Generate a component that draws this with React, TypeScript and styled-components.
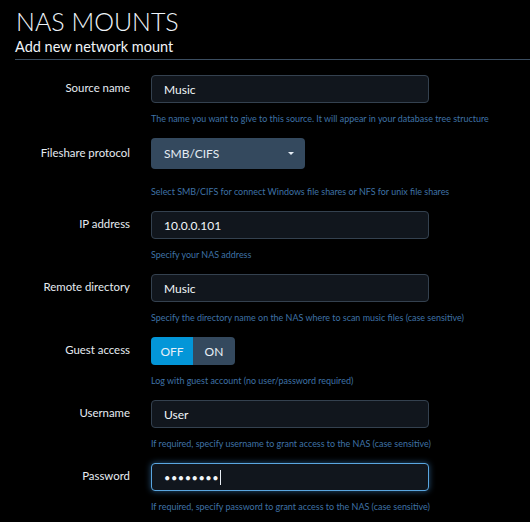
import React from "react";
import styled, { createGlobalStyle } from "styled-components";

const Global = createGlobalStyle`
  html, body { margin: 0; padding: 0; background: #000; }
  body { font-family: Lato, "Open Sans", sans-serif; color: #e8eef4; }
  * { box-sizing: border-box; }
`;

const Page = styled.div`
  padding: 0 0 0 15px;
  width: 530px;
  height: 522px;
  overflow: hidden;
`;

const Title = styled.h1`
  margin: 0;
  padding: 7px 0 0 1px;
  font-weight: 300;
  font-size: 25px;
  line-height: 28px;
  color: #eef4fa;
`;

const Subtitle = styled.h2`
  margin: 0;
  padding: 1px 0 1px;
  font-weight: 400;
  font-size: 14.5px;
  line-height: 22px;
  color: #f0f4f8;
  border-bottom: 1px solid #3b4d60;
`;

const Form = styled.div`
  display: flex;
  flex-direction: column;
  gap: 13px;
  padding-top: 15px;
`;

const Row = styled.div`
  display: grid;
  grid-template-columns: 115px 278px;
  column-gap: 21px;
  align-items: center;
`;

const Label = styled.label`
  text-align: right;
  font-size: 11.4px;
  color: #e6ecf2;
  padding-bottom: 3px;
`;

const Help = styled.div<{ $gap?: number }>`
  grid-column: 2;
  margin-top: ${(p) => p.$gap ?? 10}px;
  font-size: 8.95px;
  line-height: 12px;
  color: #3f72a6;
  white-space: nowrap;
`;

const TextInput = styled.div<{ $focused?: boolean }>`
  height: 28px;
  border-radius: 4px;
  background: #11161d;
  border: 1px solid ${(p) => (p.$focused ? "#5aa6e0" : "#34414f")};
  box-shadow: ${(p) => (p.$focused ? "0 0 6px rgba(70,150,220,0.55)" : "none")};
  display: flex;
  align-items: center;
  padding-left: 12px;
  font-size: 12px;
  color: #f2f6fa;
`;

const Dots = styled.span`
  letter-spacing: 0.5px;
  font-size: 11px;
`;

const Caret = styled.span`
  display: inline-block;
  width: 1px;
  height: 15px;
  background: #e8eef4;
  margin-left: 1px;
`;

const Select = styled.div`
  width: 154px;
  height: 31px;
  border-radius: 4px;
  background: #34495e;
  display: flex;
  align-items: center;
  justify-content: space-between;
  padding: 0 11px 0 13px;
  font-size: 12px;
  color: #e4ecf4;
`;

const Arrow = styled.span`
  width: 0;
  height: 0;
  border-left: 3px solid transparent;
  border-right: 3px solid transparent;
  border-top: 3px solid #e4ecf4;
`;

const Toggle = styled.div`
  display: flex;
  width: 84px;
  height: 28px;
  border-radius: 4px;
  overflow: hidden;
`;

const ToggleOpt = styled.div<{ $active?: boolean }>`
  flex: 1;
  display: flex;
  align-items: center;
  justify-content: center;
  font-size: 12px;
  background: ${(p) => (p.$active ? "#0396d8" : "#34495e")};
  color: #e8f0f8;
`;

export default function App() {
  return (
    <Page>
      <Global />
      <Title>NAS MOUNTS</Title>
      <Subtitle>Add new network mount</Subtitle>
      <Form>
        <Row>
          <Label>Source name</Label>
          <TextInput>Music</TextInput>
          <Help>The name you want to give to this source. It will appear in your database tree structure</Help>
        </Row>
        <Row>
          <Label>Fileshare protocol</Label>
          <Select>
            <span>SMB/CIFS</span>
            <Arrow />
          </Select>
          <Help $gap={17}>Select SMB/CIFS for connect Windows file shares or NFS for unix file shares</Help>
        </Row>
        <Row>
          <Label>IP address</Label>
          <TextInput>10.0.0.101</TextInput>
          <Help>Specify your NAS address</Help>
        </Row>
        <Row>
          <Label>Remote directory</Label>
          <TextInput>Music</TextInput>
          <Help>Specify the directory name on the NAS where to scan music files (case sensitive)</Help>
        </Row>
        <Row>
          <Label>Guest access</Label>
          <Toggle>
            <ToggleOpt $active>OFF</ToggleOpt>
            <ToggleOpt>ON</ToggleOpt>
          </Toggle>
          <Help>Log with guest account (no user/password required)</Help>
        </Row>
        <Row>
          <Label>Username</Label>
          <TextInput>User</TextInput>
          <Help>If required, specify username to grant access to the NAS (case sensitive)</Help>
        </Row>
        <Row>
          <Label>Password</Label>
          <TextInput $focused>
            <Dots>••••••••</Dots>
            <Caret />
          </TextInput>
          <Help>If required, specify password to grant access to the NAS (case sensitive)</Help>
        </Row>
      </Form>
    </Page>
  );
}
